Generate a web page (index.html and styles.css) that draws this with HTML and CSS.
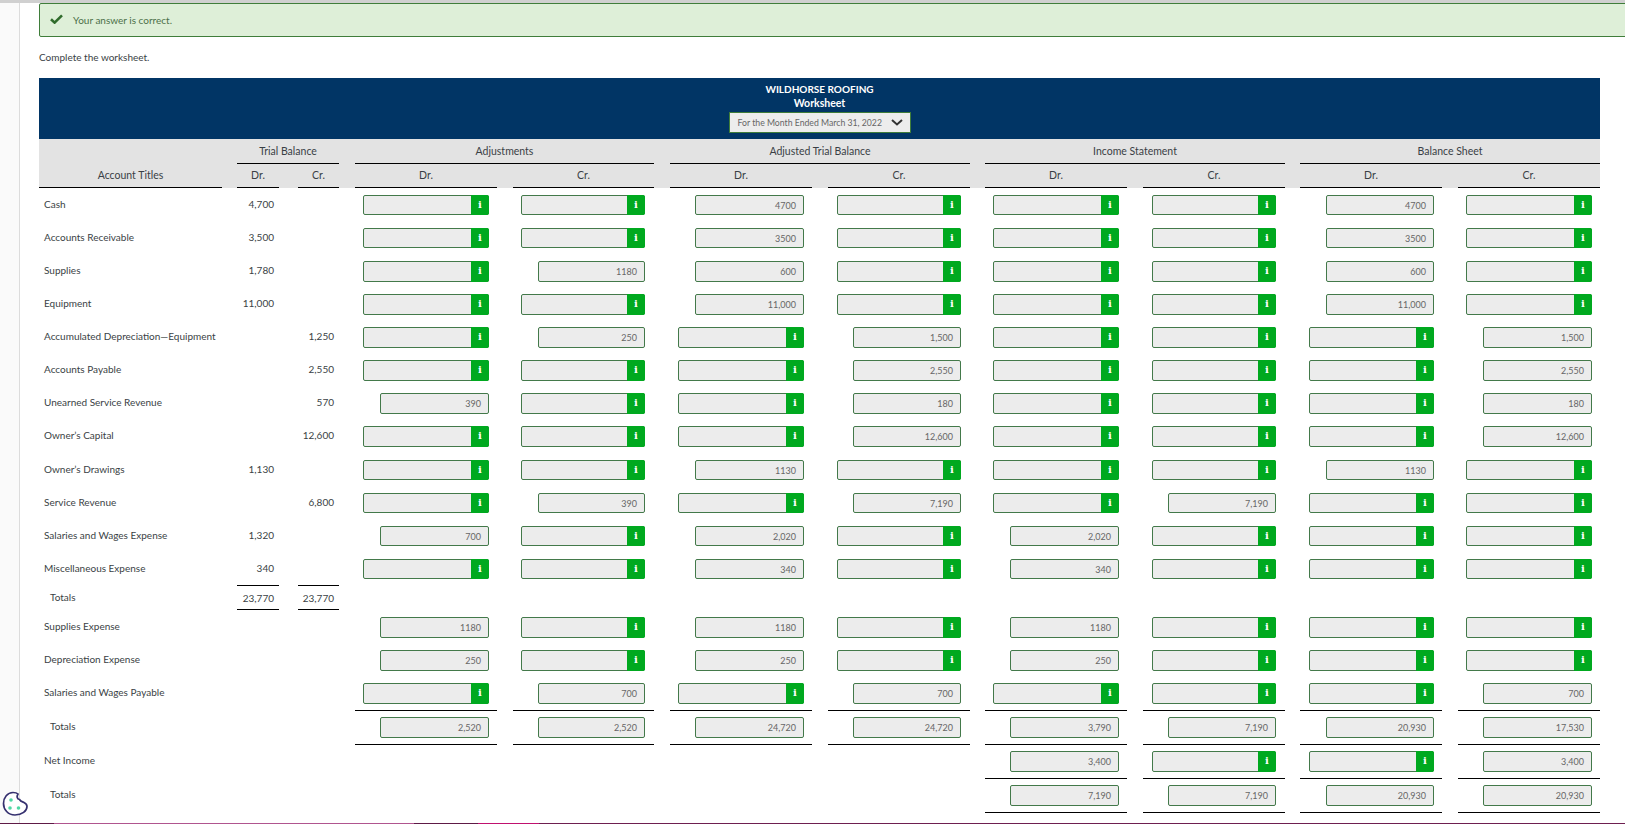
FILE: index.html
```html
<!DOCTYPE html>
<html lang="en">
<head>
<meta charset="utf-8">
<title>Worksheet</title>
<link rel="stylesheet" href="styles.css">
</head>
<body>
<div class="page">
  <aside class="rail"></aside>
  <main class="main">
    <div class="notice">
      <svg class="check" viewBox="0 0 13 10" width="13" height="10"><path d="M1 5.2l3.6 3.4L12 1.4" fill="none" stroke="#2f6b2b" stroke-width="2.6"/></svg>
      <span>Your answer is correct.</span>
    </div>
    <p class="prompt">Complete the worksheet.</p>
    <section class="sheet">
      <header class="banner">
        <div class="company">WILDHORSE ROOFING</div>
        <div class="company doc">Worksheet</div>
        <div class="period">
          <span>For the Month Ended March 31, 2022</span>
          <svg viewBox="0 0 12 7" width="12" height="7"><path d="M1 1l5 4.5L11 1" fill="none" stroke="#333" stroke-width="2"/></svg>
        </div>
      </header>
      <div class="head">
        <div class="head-title">Account Titles</div>
        <div class="group g-tb"><div class="group-name">Trial Balance</div><div class="subs"><div class="sub s-d">Dr.</div><div class="sub s-c">Cr.</div></div></div>
        <div class="group g-adj"><div class="group-name">Adjustments</div><div class="subs"><div class="sub">Dr.</div><div class="sub">Cr.</div></div></div>
        <div class="group g-wide"><div class="group-name">Adjusted Trial Balance</div><div class="subs"><div class="sub">Dr.</div><div class="sub">Cr.</div></div></div>
        <div class="group g-wide"><div class="group-name">Income Statement</div><div class="subs"><div class="sub">Dr.</div><div class="sub">Cr.</div></div></div>
        <div class="group g-wide"><div class="group-name">Balance Sheet</div><div class="subs"><div class="sub">Dr.</div><div class="sub">Cr.</div></div></div>
      </div>

      <div class="row"><div class="c t">Cash</div><div class="c n">4,700</div><div class="c n"></div>
        <div class="c"><div class="f o"><i>i</i></div></div><div class="c"><div class="f o"><i>i</i></div></div><div class="c"><div class="f">4700</div></div><div class="c"><div class="f o"><i>i</i></div></div><div class="c"><div class="f o"><i>i</i></div></div><div class="c"><div class="f o"><i>i</i></div></div><div class="c"><div class="f">4700</div></div><div class="c"><div class="f o"><i>i</i></div></div></div>
      <div class="row"><div class="c t">Accounts Receivable</div><div class="c n">3,500</div><div class="c n"></div>
        <div class="c"><div class="f o"><i>i</i></div></div><div class="c"><div class="f o"><i>i</i></div></div><div class="c"><div class="f">3500</div></div><div class="c"><div class="f o"><i>i</i></div></div><div class="c"><div class="f o"><i>i</i></div></div><div class="c"><div class="f o"><i>i</i></div></div><div class="c"><div class="f">3500</div></div><div class="c"><div class="f o"><i>i</i></div></div></div>
      <div class="row"><div class="c t">Supplies</div><div class="c n">1,780</div><div class="c n"></div>
        <div class="c"><div class="f o"><i>i</i></div></div><div class="c"><div class="f">1180</div></div><div class="c"><div class="f">600</div></div><div class="c"><div class="f o"><i>i</i></div></div><div class="c"><div class="f o"><i>i</i></div></div><div class="c"><div class="f o"><i>i</i></div></div><div class="c"><div class="f">600</div></div><div class="c"><div class="f o"><i>i</i></div></div></div>
      <div class="row"><div class="c t">Equipment</div><div class="c n">11,000</div><div class="c n"></div>
        <div class="c"><div class="f o"><i>i</i></div></div><div class="c"><div class="f o"><i>i</i></div></div><div class="c"><div class="f">11,000</div></div><div class="c"><div class="f o"><i>i</i></div></div><div class="c"><div class="f o"><i>i</i></div></div><div class="c"><div class="f o"><i>i</i></div></div><div class="c"><div class="f">11,000</div></div><div class="c"><div class="f o"><i>i</i></div></div></div>
      <div class="row"><div class="c t">Accumulated Depreciation—Equipment</div><div class="c n"></div><div class="c n">1,250</div>
        <div class="c"><div class="f o"><i>i</i></div></div><div class="c"><div class="f">250</div></div><div class="c"><div class="f o"><i>i</i></div></div><div class="c"><div class="f">1,500</div></div><div class="c"><div class="f o"><i>i</i></div></div><div class="c"><div class="f o"><i>i</i></div></div><div class="c"><div class="f o"><i>i</i></div></div><div class="c"><div class="f">1,500</div></div></div>
      <div class="row"><div class="c t">Accounts Payable</div><div class="c n"></div><div class="c n">2,550</div>
        <div class="c"><div class="f o"><i>i</i></div></div><div class="c"><div class="f o"><i>i</i></div></div><div class="c"><div class="f o"><i>i</i></div></div><div class="c"><div class="f">2,550</div></div><div class="c"><div class="f o"><i>i</i></div></div><div class="c"><div class="f o"><i>i</i></div></div><div class="c"><div class="f o"><i>i</i></div></div><div class="c"><div class="f">2,550</div></div></div>
      <div class="row"><div class="c t">Unearned Service Revenue</div><div class="c n"></div><div class="c n">570</div>
        <div class="c"><div class="f">390</div></div><div class="c"><div class="f o"><i>i</i></div></div><div class="c"><div class="f o"><i>i</i></div></div><div class="c"><div class="f">180</div></div><div class="c"><div class="f o"><i>i</i></div></div><div class="c"><div class="f o"><i>i</i></div></div><div class="c"><div class="f o"><i>i</i></div></div><div class="c"><div class="f">180</div></div></div>
      <div class="row"><div class="c t">Owner’s Capital</div><div class="c n"></div><div class="c n">12,600</div>
        <div class="c"><div class="f o"><i>i</i></div></div><div class="c"><div class="f o"><i>i</i></div></div><div class="c"><div class="f o"><i>i</i></div></div><div class="c"><div class="f">12,600</div></div><div class="c"><div class="f o"><i>i</i></div></div><div class="c"><div class="f o"><i>i</i></div></div><div class="c"><div class="f o"><i>i</i></div></div><div class="c"><div class="f">12,600</div></div></div>
      <div class="row"><div class="c t">Owner’s Drawings</div><div class="c n">1,130</div><div class="c n"></div>
        <div class="c"><div class="f o"><i>i</i></div></div><div class="c"><div class="f o"><i>i</i></div></div><div class="c"><div class="f">1130</div></div><div class="c"><div class="f o"><i>i</i></div></div><div class="c"><div class="f o"><i>i</i></div></div><div class="c"><div class="f o"><i>i</i></div></div><div class="c"><div class="f">1130</div></div><div class="c"><div class="f o"><i>i</i></div></div></div>
      <div class="row"><div class="c t">Service Revenue</div><div class="c n"></div><div class="c n">6,800</div>
        <div class="c"><div class="f o"><i>i</i></div></div><div class="c"><div class="f">390</div></div><div class="c"><div class="f o"><i>i</i></div></div><div class="c"><div class="f">7,190</div></div><div class="c"><div class="f o"><i>i</i></div></div><div class="c"><div class="f">7,190</div></div><div class="c"><div class="f o"><i>i</i></div></div><div class="c"><div class="f o"><i>i</i></div></div></div>
      <div class="row"><div class="c t">Salaries and Wages Expense</div><div class="c n">1,320</div><div class="c n"></div>
        <div class="c"><div class="f">700</div></div><div class="c"><div class="f o"><i>i</i></div></div><div class="c"><div class="f">2,020</div></div><div class="c"><div class="f o"><i>i</i></div></div><div class="c"><div class="f">2,020</div></div><div class="c"><div class="f o"><i>i</i></div></div><div class="c"><div class="f o"><i>i</i></div></div><div class="c"><div class="f o"><i>i</i></div></div></div>
      <div class="row"><div class="c t">Miscellaneous Expense</div><div class="c n">340</div><div class="c n"></div>
        <div class="c"><div class="f o"><i>i</i></div></div><div class="c"><div class="f o"><i>i</i></div></div><div class="c"><div class="f">340</div></div><div class="c"><div class="f o"><i>i</i></div></div><div class="c"><div class="f">340</div></div><div class="c"><div class="f o"><i>i</i></div></div><div class="c"><div class="f o"><i>i</i></div></div><div class="c"><div class="f o"><i>i</i></div></div></div>
      <div class="row row-sum"><div class="c t tot">Totals</div><div class="c n lined">23,770</div><div class="c n lined">23,770</div></div>
      <div class="row"><div class="c t">Supplies Expense</div><div class="c n"></div><div class="c n"></div>
        <div class="c"><div class="f">1180</div></div><div class="c"><div class="f o"><i>i</i></div></div><div class="c"><div class="f">1180</div></div><div class="c"><div class="f o"><i>i</i></div></div><div class="c"><div class="f">1180</div></div><div class="c"><div class="f o"><i>i</i></div></div><div class="c"><div class="f o"><i>i</i></div></div><div class="c"><div class="f o"><i>i</i></div></div></div>
      <div class="row"><div class="c t">Depreciation Expense</div><div class="c n"></div><div class="c n"></div>
        <div class="c"><div class="f">250</div></div><div class="c"><div class="f o"><i>i</i></div></div><div class="c"><div class="f">250</div></div><div class="c"><div class="f o"><i>i</i></div></div><div class="c"><div class="f">250</div></div><div class="c"><div class="f o"><i>i</i></div></div><div class="c"><div class="f o"><i>i</i></div></div><div class="c"><div class="f o"><i>i</i></div></div></div>
      <div class="row row-first"><div class="c t">Salaries and Wages Payable</div><div class="c n"></div><div class="c n"></div>
        <div class="c u"><div class="f o"><i>i</i></div></div><div class="c u"><div class="f">700</div></div><div class="c u"><div class="f o"><i>i</i></div></div><div class="c u"><div class="f">700</div></div><div class="c u"><div class="f o"><i>i</i></div></div><div class="c u"><div class="f o"><i>i</i></div></div><div class="c u"><div class="f o"><i>i</i></div></div><div class="c u"><div class="f">700</div></div></div>
      <div class="row row-foot"><div class="c t tot">Totals</div><div class="c n"></div><div class="c n"></div>
        <div class="c u"><div class="f">2,520</div></div><div class="c u"><div class="f">2,520</div></div><div class="c u"><div class="f">24,720</div></div><div class="c u"><div class="f">24,720</div></div><div class="c u"><div class="f">3,790</div></div><div class="c u"><div class="f">7,190</div></div><div class="c u"><div class="f">20,930</div></div><div class="c u"><div class="f">17,530</div></div></div>
      <div class="row row-foot"><div class="c t">Net Income</div><div class="c n"></div><div class="c n"></div>
        <div class="c"></div><div class="c"></div><div class="c"></div><div class="c"></div><div class="c u"><div class="f">3,400</div></div><div class="c u"><div class="f o"><i>i</i></div></div><div class="c u"><div class="f o"><i>i</i></div></div><div class="c u"><div class="f">3,400</div></div></div>
      <div class="row row-foot"><div class="c t tot">Totals</div><div class="c n"></div><div class="c n"></div>
        <div class="c"></div><div class="c"></div><div class="c"></div><div class="c"></div><div class="c u"><div class="f">7,190</div></div><div class="c u"><div class="f">7,190</div></div><div class="c u"><div class="f">20,930</div></div><div class="c u"><div class="f">20,930</div></div></div>
    </section>
  </main>
</div>
<svg class="cookie" viewBox="0 0 26 26" width="26" height="26">
  <path d="M11 1.500C13 1.500 15 2 16 3C14.500 5.500 15 8 17.500 8.500C18.500 10.500 21 11 22 11.500C24 12.500 25 14 25 15.500C25 20 20 24 13 24C6 24 1.500 18.500 1.500 12.500C1.500 6.500 5.500 1.500 11 1.500Z" fill="#fff" stroke="#35306f" stroke-width="1.700"/>
  <circle cx="9" cy="9" r="1.800" fill="#4fd8a4"/>
  <circle cx="8" cy="17" r="1.800" fill="#4fd8a4"/>
  <circle cx="16.500" cy="17" r="1.800" fill="#4fd8a4"/>
</svg>
<div class="strip"></div>
</body>
</html>
```
FILE: styles.css
```css
* { box-sizing: border-box; }
html, body { margin: 0; height: 100%; overflow: hidden; background: #fff; }
body {
  font-family: Lato, "Liberation Sans", sans-serif;
  font-size: 10px;
  color: #3a3f45;
}
.page { display: flex; height: 824px; border-top: 3px solid #d0d0d0; }
.rail { flex: 0 0 20px; background: #fafafa; border-right: 1px solid #dcdcdc; }
.main { flex: 1; min-width: 0; padding-left: 19px; }

.notice {
  display: flex; align-items: center;
  height: 34px; margin-right: -4px; padding-left: 10px;
  background: #deefd8; border: 1px solid #3f7d3a; border-radius: 2px;
  color: #4c6f49;
}
.check { margin-right: 10px; margin-top: -2px; }
.prompt { margin: 0; height: 41px; padding-top: 14px; line-height: 13px; }

.sheet { width: 1561px; }
.banner {
  display: flex; flex-direction: column; align-items: center;
  height: 61px; padding-top: 4px; background: #013565; color: #fff;
}
.company { font-weight: 700; line-height: 14px; }
.doc { font-size: 10.5px; }
.period {
  display: flex; align-items: center; justify-content: space-between;
  width: 182px; height: 21px; margin-top: 2px; padding: 0 7px 0 8px;
  background: #ededed; border: 1px solid #3f7d3a; color: #666;
  font-size: 8.700px; white-space: nowrap;
}

.head { display: flex; background: #e3e3e3; height: 49px; font-size: 10.5px; }
.head-title {
  width: 183px; padding-top: 25px; line-height: 23px; text-align: center;
  border-bottom: 1px solid #000;
}
.group { margin-left: 16px; text-align: center; }
.g-tb { width: 102px; margin-left: 15px; }
.g-adj { width: 299px; }
.g-wide { width: 300px; }
.group:nth-child(5), .group:nth-child(6) { margin-left: 15px; }
.group-name { height: 25px; line-height: 24px; border-bottom: 1px solid #000; }
.subs { display: flex; justify-content: space-between; }
.sub { flex: 0 0 142px; height: 24px; line-height: 23px; border-bottom: 1px solid #000; }
.g-adj .sub:last-child { flex-basis: 141px; }
.g-tb .s-d { flex-basis: 42px; }
.g-tb .s-c { flex-basis: 41px; }

.row { display: flex; height: 33.1px; }
.row-sum { height: 25.05px; }
.row-first { height: 34.550px; }
.row-foot { height: 34px; }

.c {
  flex: 0 0 142px; margin-left: 16px;
  display: flex; justify-content: flex-end;
  padding: 6.750px 8px 0 0; line-height: 19.600px; white-space: nowrap;
}
.row > .c:nth-child(1) { flex-basis: 183px; margin-left: 0; justify-content: flex-start; padding: 6.750px 0 0 5px; }
.row > .c:nth-child(2) { flex-basis: 42px; margin-left: 15px; padding-right: 5px; }
.row > .c:nth-child(3) { flex-basis: 41px; margin-left: 19px; padding-right: 5px; }
.row > .c:nth-child(5) { flex-basis: 141px; padding-right: 9px; }
.row > .c:nth-child(7), .row > .c:nth-child(9) { padding-right: 9px; }
.row > .c:nth-child(8), .row > .c:nth-child(10) { margin-left: 15px; }
.row-foot > .c:nth-child(n) { padding-top: 6px; }
.row-sum > .c:nth-child(n) { padding-top: 0; line-height: 24px; }
.row > .c.tot { padding-left: 11px; }
.lined { border-top: 1px solid #000; border-bottom: 1px solid #000; }
.u { border-bottom: 1px solid #000; }

.f {
  width: 109px; height: 20.600px; padding-right: 7px;
  background: #ececec; border: 1px solid #43794a; border-radius: 2px;
  color: #666; font-size: 9px; line-height: 19px; text-align: right;
}
.c:nth-child(5) > .f { width: 107px; }
.c:nth-child(7) > .f, .c:nth-child(9) > .f, .c:nth-child(10) > .f { width: 108px; }
.f.o { padding-right: 0; display: flex; justify-content: flex-end; }
.c > .f.o { width: 126px; }
.c:nth-child(5) > .f.o, .c:nth-child(7) > .f.o, .c:nth-child(9) > .f.o { width: 124px; }
.c:nth-child(10) > .f.o { width: 125px; }
.f i {
  width: 18px; margin: -1px -1px -1px 0;
  background: #00a91f; border-radius: 0 2px 2px 0;
  color: #fff; font: 700 10px/20px "DejaVu Serif", serif; text-align: center;
}

.cookie { position: absolute; left: 2px; top: 791px; }
.strip {
  position: absolute; left: 0; right: 0; bottom: 0; height: 1px;
  background: linear-gradient(90deg, #5e1a46 0 54px, #b0558f 54px 414px, #5e1a46 414px 478px, #c0116f 478px 539px, #6e1f50 539px 100%);
}
```
